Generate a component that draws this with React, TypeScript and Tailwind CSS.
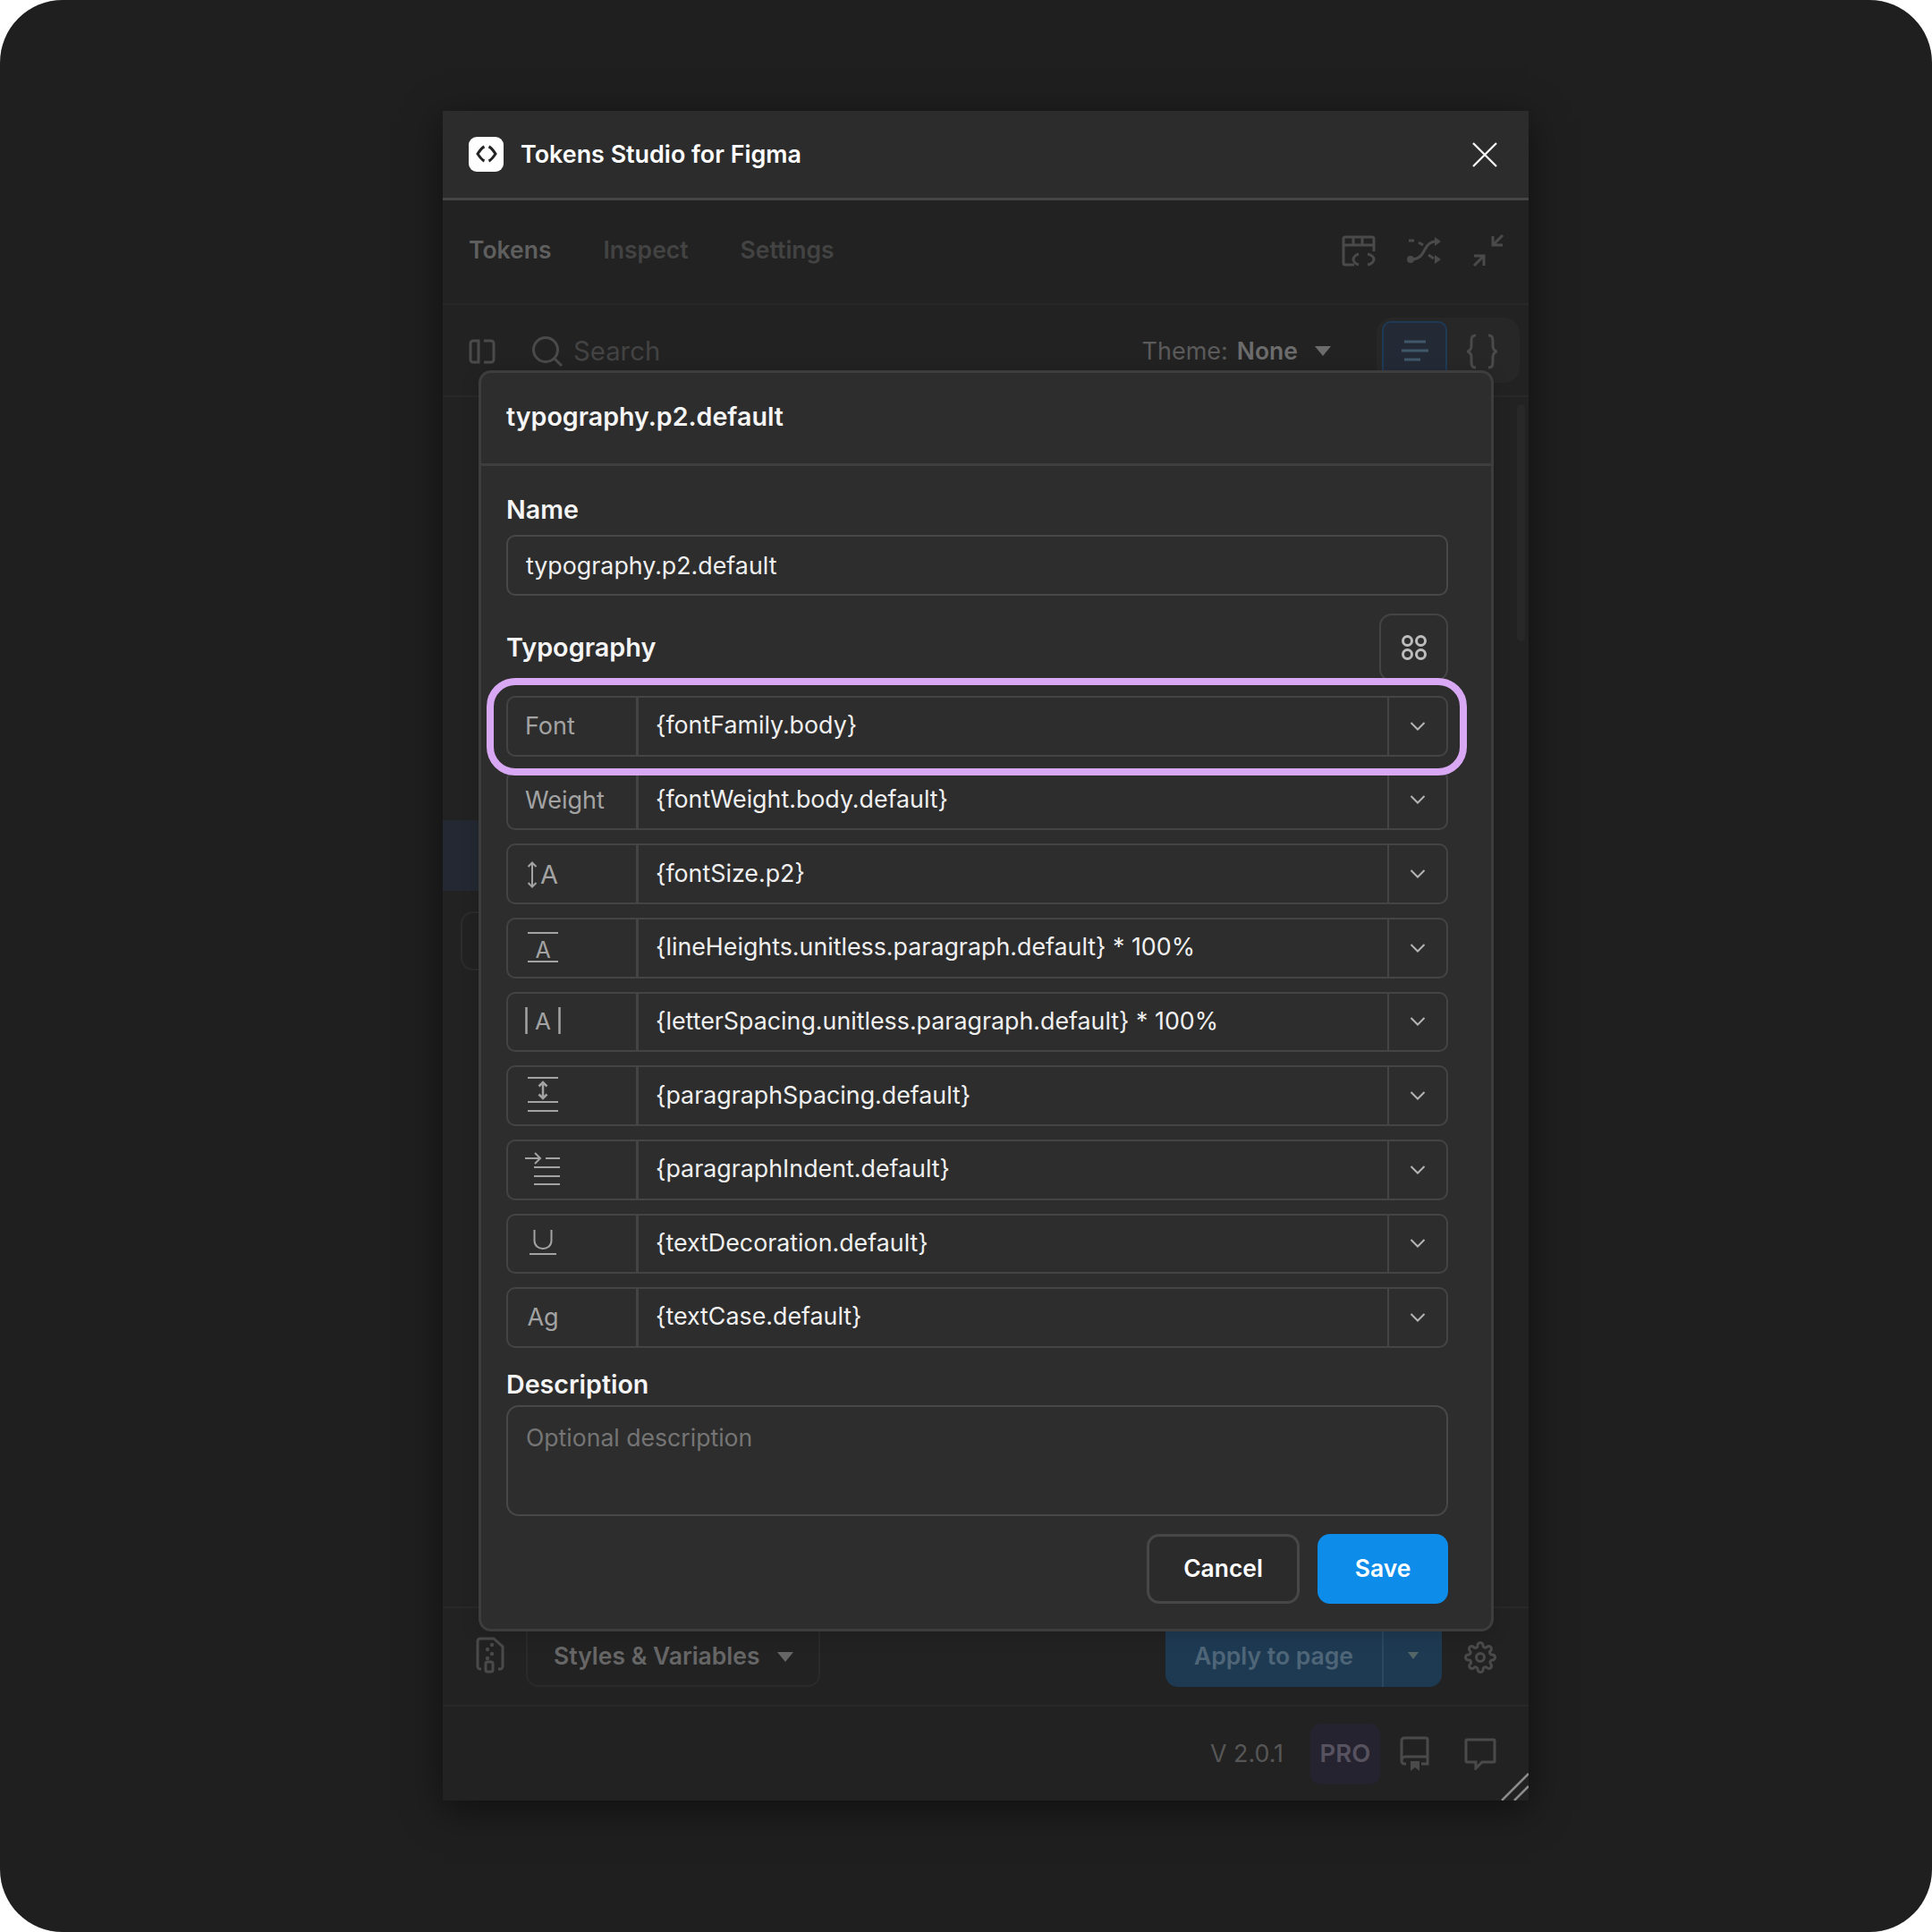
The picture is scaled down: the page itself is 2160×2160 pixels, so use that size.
import React from "react";

const rows = [
  "{fontFamily.body}",
  "{fontWeight.body.default}",
  "{fontSize.p2}",
  "{lineHeights.unitless.paragraph.default} * 100%",
  "{letterSpacing.unitless.paragraph.default} * 100%",
  "{paragraphSpacing.default}",
  "{paragraphIndent.default}",
  "{textDecoration.default}",
  "{textCase.default}",
];

function RowIcon({ i }: { i: number }) {
  if (i === 0) return <span className="pt-[1px] pl-[1px] text-[27px] text-[#a3a3a3]">Font</span>;
  if (i === 1) return <span className="pt-[1px] pl-[1px] text-[27px] text-[#a3a3a3]">Weight</span>;
  const common = { fill: "none", stroke: "#a3a3a3", strokeWidth: 2 };
  const t = { fill: "#a3a3a3", fontFamily: "Inter, sans-serif", textAnchor: "middle" as const };
  return (
    <svg width="44" height="64" viewBox="0 0 44 64" className="block">
      {i === 2 && (
        <g {...common}>
          <path d="M9 19V47M4.500 24L9 19.500L13.500 24M4.500 42L9 46.500L13.500 42" strokeWidth="2" />
          <text x="28" y="43" fontSize="29" stroke="none" {...t}>A</text>
        </g>
      )}
      {i === 3 && (
        <g {...common}>
          <path d="M4 15H38M4 47H38" />
          <text x="21" y="43" fontSize="25" stroke="none" {...t}>A</text>
        </g>
      )}
      {i === 4 && (
        <g {...common}>
          <path d="M2.500 16V46M39.500 16V46" strokeWidth="2.500" />
          <text x="21" y="41" fontSize="26" stroke="none" {...t}>A</text>
        </g>
      )}
      {i === 5 && (
        <g {...common}>
          <path d="M4 12H38M4 39H38M4 49H38" />
          <path d="M21 17V35M16.500 21.500L21 17L25.500 21.500M16.500 30.500L21 35L25.500 30.500" strokeWidth="2.500" />
        </g>
      )}
      {i === 6 && (
        <g {...common}>
          <path d="M1 19H18M12 13L18 19L12 25M24 19H40M11 29H40M11 39H40M11 48H40" />
        </g>
      )}
      {i === 7 && (
        <g {...common}>
          <path d="M11.500 17V29C11.500 41 30.500 41 30.500 29V17" />
          <path d="M6 44H36" />
        </g>
      )}
      {i === 8 && <text x="21" y="41" fontSize="27" {...t}>Ag</text>}
    </svg>
  );
}

function TokenRow({ i, text }: { i: number; text: string }) {
  return (
    <div className="relative flex h-[67.67px] rounded-[10px] border-2 border-[#444444]">
      <div className="flex w-[146px] shrink-0 items-center border-r-[3px] border-[#444444] pl-[18px]">
        <RowIcon i={i} />
      </div>
      <div className="flex flex-1 items-center pb-[3px] pl-[19px] text-[26.800px] text-[#f0f0f0]">{text}</div>
      <div className="flex w-[66px] shrink-0 items-center justify-center border-l-2 border-[#444444]">
        <svg width="18" height="12" viewBox="0 0 18 12" fill="none" stroke="#b5b5b5" strokeWidth="2">
          <path d="M1.500 2L9 9.500L16.500 2" />
        </svg>
      </div>
      {i === 0 && (
        <div className="absolute -top-[22px] -right-[23px] -bottom-[23px] -left-[24px] z-10 rounded-[32px] border-[8px] border-[#d8a8f4]" />
      )}
    </div>
  );
}

const dim = { fill: "none", stroke: "#4a4a4a", strokeWidth: 3 };

export default function App() {
  return (
    <div className="h-[2160px] w-[2160px] bg-white" style={{ fontFamily: "Inter, 'Liberation Sans', sans-serif" }}>
      <div className="h-full w-full overflow-hidden rounded-[70px] bg-[#1f1f1f] pt-[124px] pl-[495px]">
        <div className="relative flex h-[1889px] w-[1214px] flex-col bg-[#222222] shadow-[0_10px_40px_rgba(0,0,0,0.5)]">
          {/* title bar */}
          <div className="flex h-[100px] shrink-0 items-center justify-between border-b-[3px] border-[#454545] bg-[#2c2c2c] pr-[35px] pl-[29px]">
            <div className="flex items-center gap-[19px]">
              <div className="flex h-[39px] w-[39px] items-center justify-center rounded-[9px] bg-white">
                <svg width="24" height="20" viewBox="0 0 24 20" fill="none" stroke="#222222" strokeWidth="3">
                  <path d="M9.500 2C7 3 4 7 2 10C4 13 7 17 9.500 18M14.500 2C17 3 20 7 22 10C20 13 17 17 14.500 18" />
                </svg>
              </div>
              <span className="text-[26.900px] font-semibold text-white">Tokens Studio for Figma</span>
            </div>
            <svg width="28" height="28" viewBox="0 0 28 28" fill="none" stroke="#f5f5f5" strokeWidth="2.300">
              <path d="M1 1L27 27M27 1L1 27" />
            </svg>
          </div>
          {/* tabs */}
          <div className="flex h-[117px] shrink-0 items-center justify-between border-b-2 border-[#282828] pr-[26px] pl-[29px]">
            <div className="flex items-center gap-[58px] pb-[4px] text-[26.500px] font-semibold">
              <span className="text-[#5f5f5f]">Tokens</span>
              <span className="text-[#434343]">Inspect</span>
              <span className="text-[#434343]">Settings</span>
            </div>
            <div className="flex items-center pb-[3px]">
              <svg className="mt-[2px]" width="40" height="36" viewBox="0 0 40 36" {...dim}>
                <path d="M15 33H5a2 2 0 0 1-2-2V4a2 2 0 0 1 2-2h30a2 2 0 0 1 2 2v14M3 11H37M14 2V11M24 2V11" />
                <path d="M20 21C16 22 14 25 14 27C14 29 16 32 20 33M30 21C35 22 37 25 37 27C37 29 35 32 30 33" />
              </svg>
              <svg className="ml-[34px]" width="40" height="34" viewBox="0 0 40 34" {...dim}>
                <path d="M2 6L8 6M13 8L18 11M24 22L30 26" />
                <path d="M4 27C14 27 17 22 20 16C23 10 27 7 32 7" />
                <circle cx="4" cy="27" r="2.500" fill="#4a4a4a" />
                <path d="M31 2L38 7L31 12ZM31 22L38 27L31 32Z" fill="#4a4a4a" stroke="none" />
              </svg>
              <svg className="ml-[32px]" width="38" height="38" viewBox="0 0 38 38" {...dim}>
                <path d="M35 2L24 13M24 3V13H35M14 25L3 36M3 25H14V36" />
              </svg>
            </div>
          </div>
          {/* toolbar */}
          <div className="flex h-[103px] shrink-0 items-center border-b-2 border-[#282828] pr-[10px] pl-[29px]">
            <svg className="mt-[2px]" width="30" height="30" viewBox="0 0 30 30" {...dim}>
              <path d="M11 3H5a3 3 0 0 0-3 3V24a3 3 0 0 0 3 3h6ZM17 3H25a3 3 0 0 1 3 3V24a3 3 0 0 1-3 3H17" />
            </svg>
            <svg className="mt-[2px] ml-[40px]" width="36" height="36" viewBox="0 0 36 36" {...dim}>
              <circle cx="16" cy="16" r="13.500" />
              <path d="M26 26L34 34" />
            </svg>
            <span className="mt-[2px] ml-[11px] text-[29.300px] text-[#434343]">Search</span>
            <div className="ml-auto flex items-center">
              <span className="mt-[3px] text-[27px] text-[#5a5a5a]">Theme:</span>
              <span className="mt-[3px] ml-[10px] text-[26.500px] font-semibold text-[#6c6c6c]">None</span>
              <span className="mt-[2px] mr-[51px] ml-[19px] h-0 w-0 border-x-[9px] border-t-[11px] border-x-transparent border-t-[#6c6c6c]" />
              <div className="flex h-[73px] w-[160px] items-start gap-[22px] rounded-[18px] bg-[#272727] py-[4px] pl-[6px]">
                <div className="flex h-[66px] w-[73px] items-center justify-center rounded-[10px] border-2 border-[#1f3a57] bg-[#232a36]">
                  <svg width="32" height="26" viewBox="0 0 32 26" fill="none" stroke="#41586b" strokeWidth="3">
                    <path d="M4 3H28M1 13H31M4 23H22" />
                  </svg>
                </div>
                <svg className="mt-[14px]" width="34" height="40" viewBox="0 0 34 40" {...dim}>
                  <path d="M10 2C5 2 5 5 5 10V14C5 17 3 19 1 20C3 21 5 23 5 26V30C5 35 5 38 10 38M24 2C29 2 29 5 29 10V14C29 17 31 19 33 20C31 21 29 23 29 26V30C29 35 29 38 24 38" />
                </svg>
              </div>
            </div>
          </div>
          {/* list region behind the dialog */}
          <div className="relative flex-1 overflow-hidden">
            <div className="absolute top-[473px] left-0 h-[79px] w-[60px] bg-[#232832]" />
            <div className="absolute top-[575px] left-[20px] h-[66px] w-[60px] rounded-[14px] border-2 border-[#2c2c2c]" />
            <div className="absolute top-[8px] right-[4px] h-[265px] w-[9px] rounded-full bg-[#282828]" />
          </div>
          {/* footer actions */}
          <div className="flex h-[110px] shrink-0 items-end border-t-2 border-[#282828] pr-[36px] pb-[20px] pl-[37px]">
            <svg className="mb-[14px]" width="32" height="42" viewBox="0 0 32 42" fill="none" stroke="#4a4a4a" strokeWidth="3">
              <path d="M6 36H5a3 3 0 0 1-3-3V5a3 3 0 0 1 3-3H20L30 11V33a3 3 0 0 1-3 3H25" />
              <g fill="#4a4a4a" stroke="none">
                <circle cx="18" cy="9" r="2.200" />
                <circle cx="13" cy="14" r="2.200" />
                <circle cx="18" cy="19" r="2.200" />
                <circle cx="13" cy="24" r="2.200" />
              </g>
              <rect x="11" y="28" width="8" height="11" rx="2" />
            </svg>
            <div className="ml-[24px] flex h-[80px] w-[329px] items-center rounded-[14px] border-2 border-[#2a2a2a] pt-[12px] pl-[29px]">
              <span className="text-[26.500px] font-semibold text-[#666666]">Styles &amp; Variables</span>
              <span className="ml-[19px] h-0 w-0 border-x-[9px] border-t-[11px] border-x-transparent border-t-[#666666]" />
            </div>
            <div className="ml-auto flex h-[80px] w-[309px] items-stretch rounded-[14px] bg-[#1e3a52]">
              <div className="flex flex-1 items-center justify-center pt-[12px] text-[26.500px] font-semibold text-[#4f6678]">Apply to page</div>
              <div className="flex w-[67px] items-center justify-center border-l-2 border-[#2a4860] pt-[10px]">
                <span className="h-0 w-0 border-x-[6px] border-t-[8px] border-x-transparent border-t-[#556666]" />
              </div>
            </div>
            <svg className="mb-[15px] ml-[25px]" width="36" height="36" viewBox="0 0 24 24" fill="none" stroke="#4a4a4a" strokeWidth="2">
              <circle cx="12" cy="12" r="3" />
              <path d="M19.400 15a1.650 1.650 0 0 0 .33 1.820l.06.06a2 2 0 1 1-2.830 2.830l-.06-.06a1.650 1.650 0 0 0-2.820 1.170V21a2 2 0 0 1-4 0v-.09a1.650 1.650 0 0 0-2.820-1.170l-.06.06a2 2 0 1 1-2.830-2.830l.06-.06A1.650 1.650 0 0 0 3.090 14H3a2 2 0 0 1 0-4h.09a1.650 1.650 0 0 0 1.170-2.820l-.06-.06a2 2 0 1 1 2.830-2.830l.06.06A1.650 1.650 0 0 0 10 3.090V3a2 2 0 0 1 4 0v.09a1.650 1.650 0 0 0 2.820 1.170l.06-.06a2 2 0 1 1 2.830 2.830l-.06.06A1.650 1.650 0 0 0 20.910 10H21a2 2 0 0 1 0 4h-.09a1.650 1.650 0 0 0-1.510 1z" />
            </svg>
          </div>
          {/* version bar */}
          <div className="flex h-[107px] shrink-0 items-center border-t-2 border-[#282828] pr-[36px]">
            <div className="ml-auto flex items-center">
              <span className="text-[26.800px] text-[#565656]">V 2.0.1</span>
              <div className="ml-[30px] flex h-[68px] w-[78px] items-center justify-center rounded-[12px] bg-[#262330] text-[27.500px] font-semibold text-[#57525f]">PRO</div>
              <svg className="ml-[22px]" width="34" height="40" viewBox="0 0 34 40" {...dim}>
                <path d="M7 31H5a3 3 0 0 1-3-3V5a3 3 0 0 1 3-3H29a2 2 0 0 1 2 2V31H24" />
                <path d="M2 27a4 4 0 0 1 4-4H31" />
                <path d="M12 28H22V39L17 35L12 39Z" fill="#4a4a4a" stroke="none" />
              </svg>
              <svg className="ml-[38px]" width="36" height="36" viewBox="0 0 36 36" {...dim}>
                <path d="M3 2H33a1 1 0 0 1 1 1V26a1 1 0 0 1-1 1H20L13 34V27H3a1 1 0 0 1-1-1V3a1 1 0 0 1 1-1Z" />
              </svg>
            </div>
          </div>
          {/* resize grip */}
          <svg className="absolute right-0 bottom-0" width="32" height="32" viewBox="0 0 32 32" fill="none" stroke="#8c8c8c" strokeWidth="2.500">
            <path d="M2 32L32 2M16 32L32 16" />
          </svg>

          {/* dialog */}
          <div className="absolute top-[290px] left-[40px] flex h-[1410px] w-[1135px] flex-col rounded-[14px] border-[3px] border-[#3d3d3d] bg-[#2d2d2d] shadow-[0_4px_20px_rgba(0,0,0,0.15)]">
            <div className="flex h-[104px] shrink-0 items-center border-b-[3px] border-[#3e3e3e] pb-[2px] pl-[28px]">
              <span className="text-[28.600px] font-semibold text-[#f5f5f5]">typography.p2.default</span>
            </div>
            <div className="flex flex-col pt-[31px] pr-[48px] pl-[28px]">
              <label className="h-[36px] text-[28.600px] leading-[36px] font-semibold text-[#f5f5f5]">Name</label>
              <div className="mt-[10px] flex h-[68px] items-center rounded-[10px] border-2 border-[#484848] pl-[20px] text-[26.800px] text-[#f0f0f0]">typography.p2.default</div>
              <div className="mt-[20px] flex h-[76px] items-center justify-between">
                <span className="text-[28.800px] font-semibold text-[#f5f5f5]">Typography</span>
                <div className="flex h-[76px] w-[77px] items-center justify-center rounded-[14px] border-2 border-[#444444]">
                  <svg width="30" height="30" viewBox="0 0 30 30" fill="none" stroke="#bdbdbd" strokeWidth="3">
                    <circle cx="7.500" cy="7.500" r="5" />
                    <circle cx="22.500" cy="7.500" r="5" />
                    <circle cx="7.500" cy="22.500" r="5" />
                    <circle cx="22.500" cy="22.500" r="5" />
                  </svg>
                </div>
              </div>
              <div className="mt-[16px] flex flex-col gap-[15px]">
                {rows.map((r, i) => (
                  <TokenRow key={r} i={i} text={r} />
                ))}
              </div>
              <label className="mt-[23px] h-[36px] text-[28.600px] leading-[36px] font-semibold text-[#f5f5f5]">Description</label>
              <div className="mt-[5px] h-[124px] rounded-[14px] border-2 border-[#484848] pt-[17px] pl-[20px] text-[26.600px] leading-[34px] text-[#757575]">Optional description</div>
              <div className="mt-[20px] flex justify-end gap-[20px]">
                <button className="h-[78px] w-[171px] rounded-[14px] border-[3px] border-[#474747] bg-[#2b2b2b] text-[26.400px] font-semibold text-white">Cancel</button>
                <button className="h-[78px] w-[146px] rounded-[14px] bg-[#0d8ce9] text-[26.400px] font-semibold text-white">Save</button>
              </div>
            </div>
          </div>
        </div>
      </div>
    </div>
  );
}
